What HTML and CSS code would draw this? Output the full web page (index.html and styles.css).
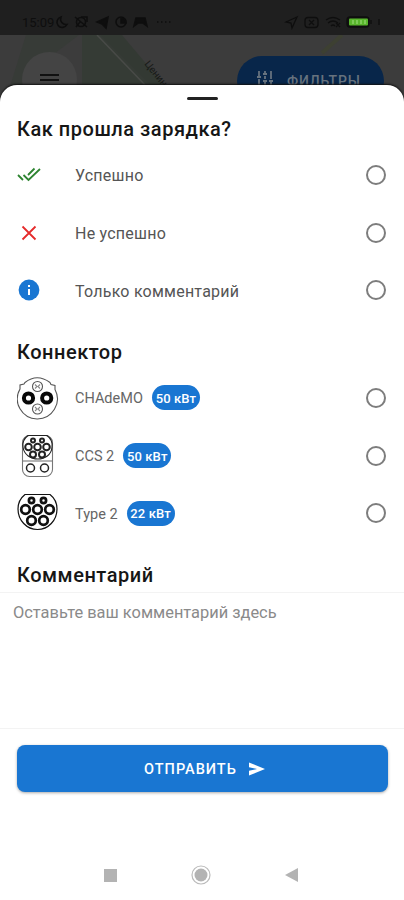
FILE: index.html
```
<!DOCTYPE html>
<html lang="ru">
<head>
<meta charset="utf-8">
<title>Как прошла зарядка?</title>
<link rel="stylesheet" href="styles.css">
</head>
<body>
<div class="screen">
  <header class="status">
    <span class="clock">15:09</span>
    <svg class="status-left" width="124" height="16" viewBox="0 0 124 16" fill="none" stroke="#0e0e0e" stroke-width="1.600">
      <path d="M7 3a5.300 5.300 0 1 0 6 7.500A5.500 5.500 0 0 1 7 3z"/>
      <circle cx="27" cy="8" r="4.500"/><path d="M21 3l12 10M22 13l4-5M27 3h6v5"/>
      <path d="M43 8l11-5-2 11-4-4z" fill="#0e0e0e"/>
      <circle cx="67" cy="8" r="5"/><path d="M67 4v5h5A5 5 0 0 0 67 4z" fill="#0e0e0e"/>
      <path d="M80 12l2-8h9l2 8-4-3h-5z" fill="#0e0e0e"/>
      <path d="M103 8h14" stroke-width="1.500" stroke-dasharray="1.500 2.500"/>
    </svg>
    <svg class="status-right" width="102" height="16" viewBox="0 0 102 16" fill="none" stroke="#0e0e0e" stroke-width="1.300">
      <path d="M2 8l11-5-5 11-1-5z"/>
      <rect x="21" y="3.500" width="13" height="10" rx="3"/><path d="M25 6l5 5m0-5l-5 5"/>
      <path d="M42 6q7-5 14 0M44 9q5-4 10 0M47 12q2-2 4 0M52 9l4 4m0-4l-4 4"/>
      <rect x="63" y="3" width="22" height="10" rx="3" fill="#101010"/>
      <rect x="65" y="4.500" width="19" height="7" rx="1" fill="#58b52c" stroke="none"/>
      <path d="M69 6v4m4-4v4m4-4v4m4-4v4" stroke="#91d66d"/>
      <path d="M87 6v4M95 5v6"/>
    </svg>
  </header>
  <div class="map">
    <svg class="terrain" width="404" height="70" viewBox="0 0 404 70">
      <path d="M26 0h53L42 28 22 58H8z" fill="#373b37"/>
      <path d="M82 0h18l50 50H82z" fill="#353b35"/>
      <path d="M100 0h22l42 50h-14z" fill="#333933"/>
      <path d="M97 0l48 50" stroke="#484a47" stroke-width="1.500"/>
      <path d="M322 18l20-18" stroke="#3d4032" stroke-width="4"/>
      <text class="street" transform="translate(144 29) rotate(51)">Ценин</text>
    </svg>
    <div class="menu"><i></i><i></i></div>
    <div class="filters">
      <svg width="18" height="18" viewBox="0 0 18 18" fill="none" stroke="#66727e" stroke-width="1.800"><path d="M3 1v5M1 7h4M3 9v8M9 1v2M7 4h4M9 6v3M7 11h4M9 11v6M15 1v8M13 11h4M15 12v5"/></svg>
      <span>ФИЛЬТРЫ</span>
    </div>
  </div>
  <main class="sheet">
    <div class="handle"></div>
    <h2 class="title title-main">Как прошла зарядка?</h2>
    <div class="options">
      <label class="row">
        <span class="icon"><svg width="24" height="16" viewBox="0 0 24 16" fill="none" stroke="#2e8431" stroke-width="1.800"><path d="M1 8l5 5M6.500 8l5 5L23 2M11 8l6.500-6.500"/></svg></span>
        <span class="label">Успешно</span><span class="radio"></span>
      </label>
      <label class="row">
        <span class="icon"><svg width="24" height="16" viewBox="0 0 24 16" fill="none" stroke="#e52b2b" stroke-width="1.800"><path d="M5.500 1.500l13 13m0-13l-13 13"/></svg></span>
        <span class="label">Не успешно</span><span class="radio"></span>
      </label>
      <label class="row">
        <span class="icon"><svg width="24" height="22" viewBox="0 0 24 22"><circle cx="12" cy="11" r="10.400" fill="#1976d2"/><path d="M11 6h2v2h-2zM11 10h2v6h-2z" fill="#fff"/></svg></span>
        <span class="label">Только комментарий</span><span class="radio"></span>
      </label>
    </div>
    <h2 class="title title-connector">Коннектор</h2>
    <div class="options connectors">
      <label class="row">
        <span class="icon"><svg width="42" height="44" viewBox="0 0 42 44" fill="none" stroke="#555" stroke-width="1.100">
          <path d="M8 6.500Q20 -3 33 6.500l1 2 4 1v4A20 20 0 1 1 3 13V9l4-1z"/>
          <circle cx="20.500" cy="10.500" r="5"/><circle cx="20.500" cy="33" r="5"/>
          <path d="M18 8.500l2 2-2 2m5-4l-2 2 2 2M18 31l2 2-2 2m5-4l-2 2 2 2" stroke="#888"/>
          <circle cx="11.500" cy="22" r="4.600" stroke="#080808" stroke-width="4"/><circle cx="29.700" cy="22" r="4.600" stroke="#080808" stroke-width="4"/>
        </svg></span>
        <span class="label">CHAdeMO</span><span class="power">50 кВт</span><span class="radio"></span>
      </label>
      <label class="row">
        <span class="icon"><svg width="42" height="44" viewBox="0 0 42 44" fill="none" stroke="#222" stroke-width="1.100">
          <rect x="5.500" y="1.500" width="30" height="41" rx="7" stroke="#777"/>
          <path d="M11 1.500h19Q36 6 35 13C34 29 8 29 6 13Q5 6 11 1.500z"/><path d="M6 27h29" stroke="#777"/>
          <g stroke-width="2"><circle cx="16" cy="6.500" r="2"/><circle cx="25" cy="6.500" r="2"/><circle cx="11.500" cy="13" r="3.300"/><circle cx="20.500" cy="13" r="3.300"/><circle cx="29.500" cy="13" r="3.300"/><circle cx="16" cy="20.500" r="3"/><circle cx="25" cy="20.500" r="3"/></g>
          <circle cx="13.500" cy="34" r="4" stroke-width="1.500"/><circle cx="27.500" cy="34" r="4" stroke-width="1.500"/>
        </svg></span>
        <span class="label">CCS 2</span><span class="power">50 кВт</span><span class="radio"></span>
      </label>
      <label class="row">
        <span class="icon"><svg width="42" height="44" viewBox="0 0 42 44" fill="none" stroke="#111" stroke-width="1.200">
          <path d="M8 3.500h25Q40 9 40 18A19.500 20.500 0 0 1 1 18Q1 9 8 3.500z"/>
          <g stroke-width="2.700"><circle cx="14.500" cy="9.500" r="2.600"/><circle cx="26.500" cy="9.500" r="2.600"/><circle cx="8.500" cy="18.500" r="4.300"/><circle cx="20.500" cy="18.500" r="4.300"/><circle cx="32.500" cy="18.500" r="4.300"/><circle cx="14.500" cy="29.500" r="4.300"/><circle cx="26.500" cy="29.500" r="4.300"/></g>
        </svg></span>
        <span class="label">Type 2</span><span class="power">22 кВт</span><span class="radio"></span>
      </label>
    </div>
    <h2 class="title title-comment">Комментарий</h2>
    <div class="comment">Оставьте ваш комментарий здесь</div>
    <div class="send"><span>ОТПРАВИТЬ</span><svg width="16" height="14" viewBox="0 0 16 14"><path d="M0 .5L16 7 0 13.500V8.700L8 7 0 5.300z" fill="#fff"/></svg></div>
    <nav class="nav">
      <svg width="13" height="13" viewBox="0 0 13 13"><path d="M0 0h13v13H0z" fill="#b3b3b3"/></svg>
      <svg width="20" height="20" viewBox="0 0 20 20"><circle cx="10" cy="10" r="9" fill="none" stroke="#bbb" stroke-width="1.200"/><circle cx="10" cy="10" r="6.500" fill="#b3b3b3"/></svg>
      <svg width="13" height="14" viewBox="0 0 13 14"><path d="M0 7L13 0v14z" fill="#b3b3b3"/></svg>
    </nav>
  </main>
</div>
</body>
</html>
```
FILE: styles.css
```
* { box-sizing: border-box; }
body { margin: 0; font-family: Roboto, "Noto Sans", sans-serif; background: #3c3c3c; }
svg { display: block; flex: none; }
.screen { width: 404px; height: 900px; display: flex; flex-direction: column; overflow: hidden; }
.status { height: 35px; flex: none; background: #1f1f1f; display: flex; align-items: center; padding: 9px 18px 0 22px; }
.clock { color: #0e0e0e; font-size: 13px; width: 32px; white-space: nowrap; }
.status-right { margin-left: auto; }
.map { position: relative; height: 50px; flex: none; background: #3c3c3c; display: flex; justify-content: space-between; padding: 0 20px 0 22px; }
.terrain { position: absolute; left: 0; top: 0; }
.street { font-size: 10px; fill: #171917; }
.menu { position: relative; width: 55px; height: 55px; margin-top: 17px; border-radius: 50%; background: #444; display: flex; flex-direction: column; align-items: center; gap: 3px; padding-top: 22px; }
.menu i { width: 19px; height: 2px; background: #111; }
.filters { position: relative; width: 147px; height: 50px; margin-top: 21px; border-radius: 25px; background: #08264a; color: #66727e; display: flex; gap: 13px; padding: 14px 0 0 19px; font-size: 14px; font-weight: 500; letter-spacing: .8px; line-height: 23px; }
.sheet { position: relative; flex: 1; background: #fff; border-radius: 17px 17px 0 0; display: flex; flex-direction: column; box-shadow: 0 -1px 2px #111; }
.handle { width: 31px; height: 3px; border-radius: 2px; background: #222; margin: 12px auto 0; }
.title { margin: 0 0 0 17px; font-size: 20px; font-weight: 500; line-height: 24px; color: #161616; white-space: nowrap; letter-spacing: .53px; }
.title-main { margin-top: 17px; margin-bottom: 5px; }
.title-connector { margin-top: 21px; margin-bottom: 5px; }
.title-comment { margin-top: 21px; margin-bottom: 5px; }
.options { display: grid; grid-auto-rows: 57.700px; }
.row { display: flex; align-items: center; padding: 0 18px 0 17px; }
.icon { width: 58px; flex: none; }
.label { font-size: 16px; color: #555; white-space: nowrap; letter-spacing: .23px; padding-top: 2px; }
.connectors .label { font-size: 14.500px; letter-spacing: 0; color: #666; }
.power { width: 48px; height: 25px; margin-left: 9px; border-radius: 13px; background: #1976d2; color: #fff; font-size: 13px; font-weight: 500; display: flex; align-items: center; justify-content: center; letter-spacing: .1px; white-space: nowrap; padding-top: 1px; }
.radio { width: 20px; height: 20px; margin-left: auto; border: 2px solid #7d7d7d; border-radius: 50%; }
.comment { height: 137px; border-top: 1px solid #f3f3f3; border-bottom: 1px solid #f3f3f3; padding: 9px 13px; font-size: 16.400px; line-height: 22px; color: #8a8a8a; white-space: nowrap; }
.send { height: 47px; flex: none; margin: 16px 16px 0 17px; border-radius: 8px; background: #1976d2; color: #fff; display: flex; align-items: center; justify-content: center; gap: 12px; padding-left: 4px; font-size: 14.500px; font-weight: 500; letter-spacing: 1px; box-shadow: 0 1px 3px #aaa; }
.send span { padding-top: 1px; }
.nav { display: flex; justify-content: space-between; align-items: center; height: 20px; margin: 73px 106px 0 104px; }
```
